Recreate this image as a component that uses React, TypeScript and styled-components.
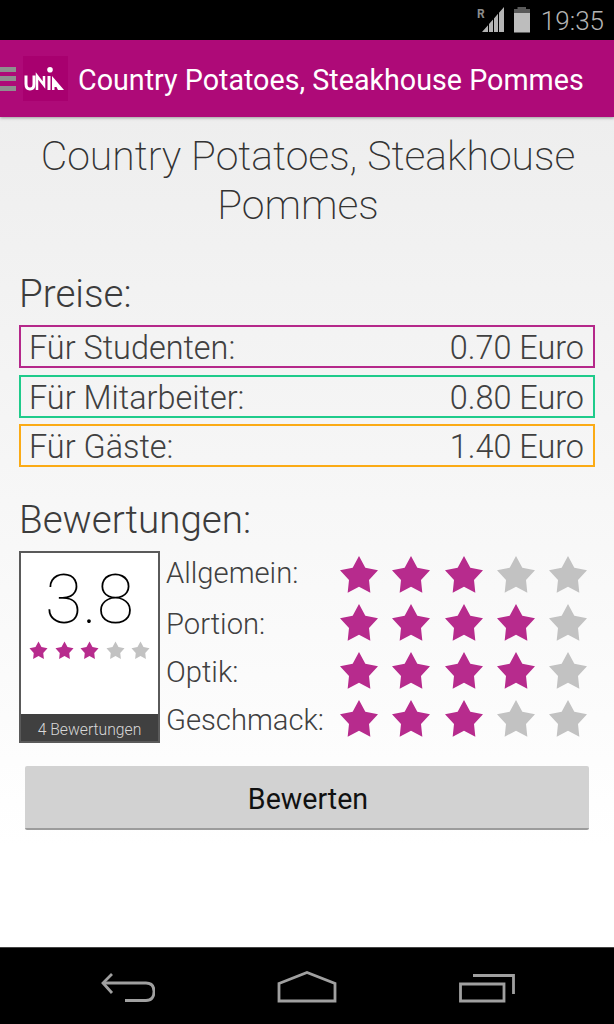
import styled, { createGlobalStyle } from 'styled-components';

const Global = createGlobalStyle`
  html, body {
    margin: 0;
    padding: 0;
    background: #fff;
  }
  * {
    box-sizing: border-box;
  }
`;

const Screen = styled.div`
  width: 614px;
  height: 1024px;
  display: flex;
  flex-direction: column;
  overflow: hidden;
  font-family: Roboto, "Liberation Sans", sans-serif;
`;

const StatusBar = styled.div`
  height: 40px;
  flex: none;
  background: #000;
  display: flex;
  align-items: center;
  justify-content: flex-end;
  padding-right: 10px;
  color: #b4b4b4;
`;

const Battery = styled.svg`
  margin-left: 8px;
`;

const Clock = styled.span`
  font-size: 26px;
  font-weight: 300;
  margin-left: 10px;
  padding-top: 2px;
`;

const AppBar = styled.div`
  height: 77px;
  flex: none;
  background: #ae0a78;
  display: flex;
  align-items: center;
  box-shadow: 0 1px 3px rgba(0, 0, 0, 0.35);
  position: relative;
  z-index: 1;
`;

const Hamburger = styled.div`
  width: 16px;
  height: 24px;
  flex: none;
  display: flex;
  flex-direction: column;
  justify-content: space-between;
  margin-right: 7px;
`;

const HamburgerLine = styled.div`
  height: 5px;
  background: #8f8f8f;
`;

const Logo = styled.div`
  width: 45px;
  height: 45px;
  flex: none;
  background: #a8006f;
`;

const AppTitle = styled.div`
  margin: 3px 0 0 10px;
  color: #fff;
  font-size: 28.7px;
  white-space: nowrap;
`;

const Content = styled.div`
  flex: 1;
  background: linear-gradient(#eeeeee 0, #ffffff 730px);
  padding: 15px 19px 0;
`;

const Title = styled.h1`
  margin: 0 0 42px;
  font-size: 40.9px;
  line-height: 49px;
  font-weight: 200;
  color: #333;
  text-align: center;
`;

const TitleLine = styled.span<{ $inset?: number }>`
  display: block;
  padding-right: ${(p) => p.$inset ?? 0}px;
  margin-right: -2px;
`;

const SectionTitle = styled.h2`
  margin: 0 0 9px;
  font-size: 38.6px;
  line-height: 44px;
  font-weight: 300;
  color: #3c3c3c;
`;

const Prices = styled.div`
  display: flex;
  flex-direction: column;
  gap: 6.5px;
  margin-bottom: 31px;
`;

const PriceRow = styled.div<{ $color: string }>`
  height: 43px;
  border: 2px solid ${(p) => p.$color};
  display: flex;
  align-items: center;
  justify-content: space-between;
  padding: 3px 9px 0 8px;
  font-size: 32.4px;
  font-weight: 300;
  color: #404040;
`;

const Ratings = styled.div`
  display: flex;
`;

const ScoreCard = styled.div`
  width: 141px;
  height: 192px;
  flex: none;
  border: 2px solid #5a5a5a;
  background: #fff;
  display: flex;
  flex-direction: column;
  align-items: center;
`;

const ScoreValue = styled.div`
  margin-top: 9px;
  font-size: 68px;
  line-height: 76px;
  font-weight: 100;
  color: #000;
`;

const SmallStars = styled.div`
  display: flex;
  gap: 6.5px;
  margin-top: 3px;
  flex: 1;
`;

const ScoreFooter = styled.div`
  align-self: stretch;
  height: 27px;
  padding-top: 3px;
  background: #404040;
  color: #d8d8d8;
  font-size: 15.7px;
  font-weight: 300;
  display: flex;
  align-items: center;
  justify-content: center;
`;

const RatingGrid = styled.div`
  display: flex;
  flex-direction: column;
  margin-left: 6px;
  flex: 1;
`;

const RatingRow = styled.div`
  height: 48px;
  display: flex;
  align-items: center;
  justify-content: space-between;
  padding-right: 7px;
`;

const RatingLabel = styled.span<{ $first?: boolean }>`
  font-size: 29.2px;
  font-weight: 300;
  color: #404040;
  margin-top: ${(p) => (p.$first ? -5 : 1)}px;
`;

const StarRow = styled.div`
  display: flex;
  gap: 12.2px;
  margin-top: -1px;
`;

const RateButton = styled.button`
  display: block;
  width: 564px;
  height: 64px;
  margin: 23px 0 0 6px;
  padding: 3px 0 0 2px;
  border: none;
  border-bottom: 2px solid #9c9c9c;
  border-radius: 2px;
  background: #d2d2d2;
  color: #111;
  font-family: Roboto, "Liberation Sans", sans-serif;
  font-size: 28.6px;
`;

const NavBar = styled.div`
  height: 77px;
  flex: none;
  background: #000;
  border-top: 1px solid #444;
  display: flex;
  align-items: flex-start;
  padding: 23px 0 0 37px;
`;

const NavSlot = styled.div`
  width: 180px;
  height: 32px;
  display: flex;
  justify-content: center;
  align-items: flex-end;
`;

const STAR = 'M12 0.6 L15.8 7.6 L23.4 9.2 L18 15 L18.8 22.6 L12 19 L5.2 22.6 L6 15 L0.6 9.2 L8.2 7.6 Z';

function Star({ on, size }: { on: boolean; size: number }) {
  return (
    <svg width={size} height={size} viewBox="0 0 24 24">
      <path d={STAR} fill={on ? '#b72b8d' : '#c2c2c2'} />
    </svg>
  );
}

function Stars({ value, size }: { value: number; size: number }) {
  return (
    <>
      {[1, 2, 3, 4, 5].map((n) => (
        <Star key={n} on={n <= value} size={size} />
      ))}
    </>
  );
}

const prices = [
  { label: 'Für Studenten:', value: '0.70 Euro', color: '#b5288a' },
  { label: 'Für Mitarbeiter:', value: '0.80 Euro', color: '#1fcb8b' },
  { label: 'Für Gäste:', value: '1.40 Euro', color: '#fbab16' }
];

const ratings = [
  { label: 'Allgemein:', value: 3 },
  { label: 'Portion:', value: 4 },
  { label: 'Optik:', value: 4 },
  { label: 'Geschmack:', value: 3 }
];

export default function App() {
  return (
    <Screen>
      <Global />
      <StatusBar>
        <svg width="28" height="26" viewBox="0 0 28 26" fill="#b4b4b4">
          <text x="0" y="11" fontSize="12" fontWeight="700" fontFamily="Roboto" fill="#8c8c8c">R</text>
          <path d="M5 25 L11 18.2 V25 Z M12 17 L16 12.5 V25 H12 Z M17 11.4 L21 6.8 V25 H17 Z M22 5.7 L27 0 V25 H22 Z" />
        </svg>
        <Battery width="18" height="26" viewBox="0 0 18 26">
          <path d="M4.5 0 H13 V2 H17 V6 H1 V2 H4.5 Z" fill="#5a5a5a" />
          <path d="M1 6 H17 V25.5 H1 Z" fill="#bdbdbd" />
        </Battery>
        <Clock>19:35</Clock>
      </StatusBar>
      <AppBar>
        <Hamburger>
          <HamburgerLine />
          <HamburgerLine />
          <HamburgerLine />
        </Hamburger>
        <Logo>
          <svg width="45" height="45" viewBox="0 0 45 45">
            <path d="M3 19.5 V28 Q3 33 7 33 Q11 33 11 28 V19.5" fill="none" stroke="#fff" strokeWidth="3" />
            <path d="M14 34 V20 L21 29 V20" fill="none" stroke="#fff" strokeWidth="2.5" />
            <path d="M24.5 20 H27.5 V34 H24.5 Z" fill="#fff" />
            <circle cx="27" cy="13.7" r="2.8" fill="#fff" />
            <path d="M29 34 V20 L41 34 H35 L33.5 31 H31.5 V34 Z" fill="#fff" />
          </svg>
        </Logo>
        <AppTitle>Country Potatoes, Steakhouse Pommes</AppTitle>
      </AppBar>
      <Content>
        <Title>
          <TitleLine>Country Potatoes, Steakhouse</TitleLine>
          <TitleLine $inset={20}>Pommes</TitleLine>
        </Title>
        <SectionTitle>Preise:</SectionTitle>
        <Prices>
          {prices.map((p) => (
            <PriceRow key={p.label} $color={p.color}>
              <span>{p.label}</span>
              <span>{p.value}</span>
            </PriceRow>
          ))}
        </Prices>
        <SectionTitle>Bewertungen:</SectionTitle>
        <Ratings>
          <ScoreCard>
            <ScoreValue>3.8</ScoreValue>
            <SmallStars>
              <Stars value={3} size={19} />
            </SmallStars>
            <ScoreFooter>4 Bewertungen</ScoreFooter>
          </ScoreCard>
          <RatingGrid>
            {ratings.map((r, i) => (
              <RatingRow key={r.label}>
                <RatingLabel $first={i === 0}>{r.label}</RatingLabel>
                <StarRow>
                  <Stars value={r.value} size={40} />
                </StarRow>
              </RatingRow>
            ))}
          </RatingGrid>
        </Ratings>
        <RateButton>Bewerten</RateButton>
      </Content>
      <NavBar>
        <NavSlot>
          <svg width="56" height="30" viewBox="0 0 56 30" fill="none" stroke="#a0a0a0" strokeWidth="2.8">
            <path d="M13 1 L4 10 L13 20" />
            <path d="M4 10 H47 Q55 10 55 18.5 Q55 27.5 47 27.5 H26" />
          </svg>
        </NavSlot>
        <NavSlot>
          <svg width="60" height="32" viewBox="0 0 60 32" fill="none" stroke="#a0a0a0" strokeWidth="2.8">
            <path d="M2 12.5 L30 1.5 L58 12.5 V30 H2 Z" />
          </svg>
        </NavSlot>
        <NavSlot>
          <svg width="56" height="30" viewBox="0 0 56 30" fill="none" stroke="#a0a0a0" strokeWidth="2.8">
            <path d="M1.5 11 H45 V28 H1.5 Z" />
            <path d="M14 2.5 H54.5 V21" />
          </svg>
        </NavSlot>
      </NavBar>
    </Screen>
  );
}
